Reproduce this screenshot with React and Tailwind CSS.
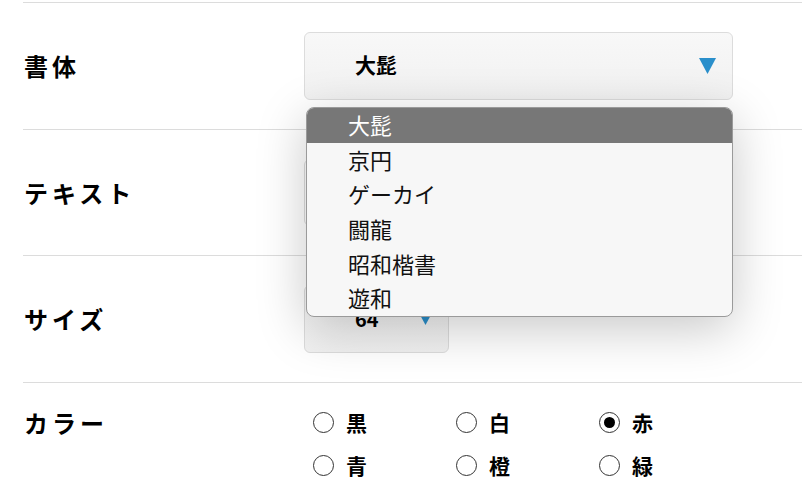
import React from "react";

const jp = { fontFamily: '"Noto Sans CJK JP", "Noto Sans", sans-serif' };

function Tri({ size = "big" }) {
  return size === "big" ? (
    <svg width="17" height="16" viewBox="0 0 17 16" className="block">
      <path d="M0 0 L17 0 L8.5 16 Z" fill="#2a8fcb" />
    </svg>
  ) : (
    <svg width="13" height="12" viewBox="0 0 13 12" className="block">
      <path d="M0 0 L13 0 L6.5 12 Z" fill="#2a8fcb" />
    </svg>
  );
}

function Radio({ label, checked }) {
  return (
    <div className="flex items-center w-[143px] h-[43px]">
      <span className="w-[21px] h-[21px] rounded-full border border-[#333] bg-white flex items-center justify-center">
        {checked && <span className="w-[11px] h-[11px] rounded-full bg-black" />}
      </span>
      <span className="ml-[12px] text-[21px] font-bold text-black leading-none">{label}</span>
    </div>
  );
}

const items = ["大髭", "京円", "ゲーカイ", "闘龍", "昭和楷書", "遊和"];

export default function App() {
  return (
    <div className="w-[802px] h-[493px] bg-white overflow-hidden pt-[2px] pl-[23px]" style={jp}>
      {/* Row 1 */}
      <div className="relative z-10 flex items-start border-t border-[#dcdcdc] py-[29px]">
        <div className="w-[281px] pl-[1px] h-[68px] flex items-center text-[24px] font-bold tracking-[4px] text-black">書体</div>
        <div className="relative">
          <div className="w-[429px] h-[68px] rounded-[6px] border border-[#dcdcdc] bg-gradient-to-b from-[#f8f8f8] to-[#f1f1f1] flex items-center justify-between pl-[50px] pr-[16px]">
            <span className="text-[21px] font-bold text-black -mt-[2px]">大髭</span>
            <Tri />
          </div>
          <div className="absolute left-[2px] top-[75px] w-[427px] rounded-[8px] border border-[#9a9a9a] bg-[#f7f7f7] overflow-hidden shadow-[0_12px_50px_rgba(0,0,0,0.22)]">
            {items.map((t, i) => (
              <div
                key={t}
                className={
                  i === 0
                    ? "h-[35px] flex items-center pl-[41px] pb-[2px] bg-[#777777] text-white text-[22px]"
                    : "h-[34.6px] flex items-center pl-[41px] pb-[2px] text-[#111] text-[22px]"
                }
              >
                {t}
              </div>
            ))}
          </div>
        </div>
      </div>
      {/* Row 2 */}
      <div className="flex items-start border-t border-[#dcdcdc] py-[29px]">
        <div className="w-[281px] pl-[1px] h-[67px] flex items-center text-[24px] font-bold tracking-[4px] text-black">テキスト</div>
        <div className="w-[429px] h-[67px] rounded-[6px] border border-[#dcdcdc] bg-white" />
      </div>
      {/* Row 3 */}
      <div className="flex items-start border-t border-[#dcdcdc] py-[29px]">
        <div className="w-[281px] pl-[1px] h-[68px] flex items-center text-[24px] font-bold tracking-[4px] text-black">サイズ</div>
        <div className="w-[145px] h-[68px] rounded-[6px] border border-[#dcdcdc] bg-gradient-to-b from-[#f8f8f8] to-[#f1f1f1] flex items-center justify-between pl-[50px] pr-[16px]">
          <span className="text-[20px] font-bold text-black">64</span>
          <Tri size="small" />
        </div>
      </div>
      {/* Row 4 */}
      <div className="flex items-start border-t border-[#dcdcdc] pt-[18px]">
        <div className="w-[290px] pl-[1px] h-[43px] flex items-center text-[24px] font-bold tracking-[4px] text-black">カラー</div>
        <div className="flex flex-col">
          <div className="flex">
            <Radio label="黒" />
            <Radio label="白" />
            <Radio label="赤" checked />
          </div>
          <div className="flex">
            <Radio label="青" />
            <Radio label="橙" />
            <Radio label="緑" />
          </div>
        </div>
      </div>
    </div>
  );
}
